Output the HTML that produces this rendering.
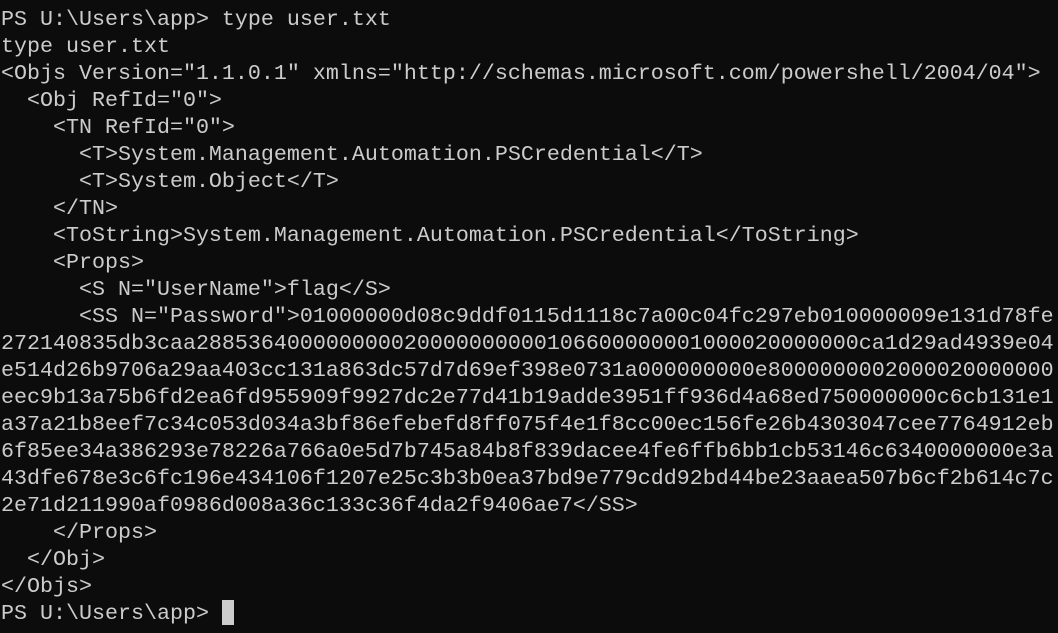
<!DOCTYPE html>
<html><head><meta charset="utf-8"><style>
html,body{margin:0;padding:0;background:#0c0c0c;}
body{width:1058px;height:633px;overflow:hidden;}
pre{margin:0;padding:6px 0 0 1px;font-family:"Liberation Mono","DejaVu Sans Mono",monospace;font-size:21.67px;line-height:27px;color:#cccccc;white-space:pre;}
.cur{display:inline-block;width:12px;height:25px;background:#cccccc;vertical-align:-6px;}
</style></head><body><pre>PS U:\Users\app&gt; type user.txt
type user.txt
&lt;Objs Version="1.1.0.1" xmlns="http://schemas.microsoft.com/powershell/2004/04"&gt;
  &lt;Obj RefId="0"&gt;
    &lt;TN RefId="0"&gt;
      &lt;T&gt;System.Management.Automation.PSCredential&lt;/T&gt;
      &lt;T&gt;System.Object&lt;/T&gt;
    &lt;/TN&gt;
    &lt;ToString&gt;System.Management.Automation.PSCredential&lt;/ToString&gt;
    &lt;Props&gt;
      &lt;S N="UserName"&gt;flag&lt;/S&gt;
      &lt;SS N="Password"&gt;01000000d08c9ddf0115d1118c7a00c04fc297eb010000009e131d78fe
272140835db3caa2885364000000000200000000001066000000010000200000<!---->00ca1d29ad4939e04
e514d26b9706a29aa403cc131a863dc57d7d69ef398e0731a000000000e8000000002000020000000
eec9b13a75b6fd2ea6fd955909f9927dc2e77d41b19adde3951ff936d4a68ed750000000c6cb131e1
a37a21b8eef7c34c053d034a3bf86efebefd8ff075f4e1f8cc00ec156fe26b4303047cee7764912eb
6f85ee34a386293e78226a766a0e5d7b745a84b8f839dacee4fe6ffb6bb1cb53146c6340000000e3a
43dfe678e3c6fc196e434106f1207e25c3b3b0ea37bd9e779cdd92bd44be23aaea507b6cf2b614c7c
2e71d211990af0986d008a36c133c36f4da2f9406ae7&lt;/SS&gt;
    &lt;/Props&gt;
  &lt;/Obj&gt;
&lt;/Objs&gt;
PS U:\Users\app&gt; <span class="cur"></span></pre></body></html>
